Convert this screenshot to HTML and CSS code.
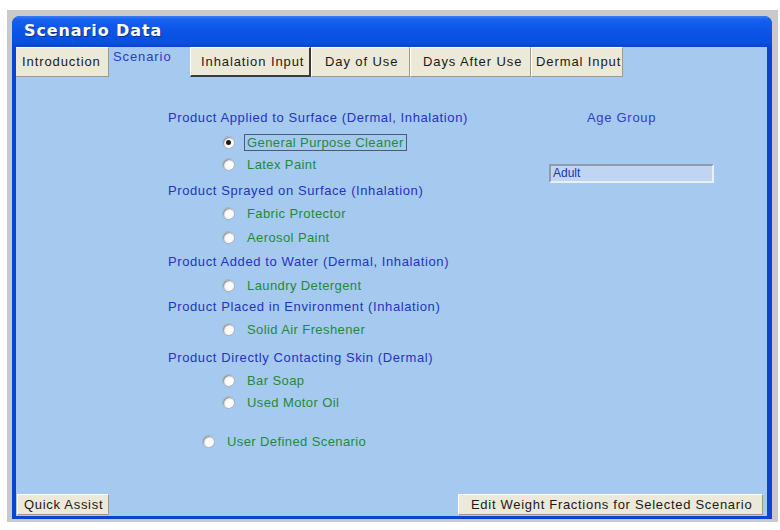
FILE: index.html
```html
<!DOCTYPE html>
<html>
<head>
<meta charset="utf-8">
<link rel="stylesheet" href="styles.css">
</head>
<body>
<div class="frame">
  <div class="window">
    <div class="titlebar">Scenario Data</div>
    <div class="content">
      <div class="tabs">
        <div class="tab t-intro">Introduction</div>
        <div class="tab t-scen active">Scenario</div>
        <div class="tab t-inh raised">Inhalation Input</div>
        <div class="tab t-day">Day of Use</div>
        <div class="tab t-after">Days After Use</div>
        <div class="tab t-derm">Dermal Input</div>
      </div>
      <div class="main">
        <div class="list">
          <div class="row head h1">Product Applied to Surface (Dermal, Inhalation)</div>
          <div class="row opt o1"><span class="radio checked"></span><span class="label focus">General Purpose Cleaner</span></div>
          <div class="row opt"><span class="radio"></span><span class="label">Latex Paint</span></div>
          <div class="row head h2">Product Sprayed on Surface (Inhalation)</div>
          <div class="row opt"><span class="radio"></span><span class="label">Fabric Protector</span></div>
          <div class="row opt o2"><span class="radio"></span><span class="label">Aerosol Paint</span></div>
          <div class="row head h3">Product Added to Water (Dermal, Inhalation)</div>
          <div class="row opt o3"><span class="radio"></span><span class="label">Laundry Detergent</span></div>
          <div class="row head">Product Placed in Environment (Inhalation)</div>
          <div class="row opt"><span class="radio"></span><span class="label">Solid Air Freshener</span></div>
          <div class="row head h5">Product Directly Contacting Skin (Dermal)</div>
          <div class="row opt"><span class="radio"></span><span class="label">Bar Soap</span></div>
          <div class="row opt"><span class="radio"></span><span class="label">Used Motor Oil</span></div>
          <div class="row opt user"><span class="radio"></span><span class="label">User Defined Scenario</span></div>
        </div>
        <div class="age">
          <div class="age-title">Age Group</div>
          <div class="age-box">Adult</div>
        </div>
      </div>
      <div class="buttons">
        <div class="btn quick">Quick Assist</div>
        <div class="btn edit">Edit Weight Fractions for Selected Scenario</div>
      </div>
    </div>
  </div>
</div>
</body>
</html>
```
FILE: styles.css
```css
html, body {
  margin: 0;
  padding: 0;
  background: #ffffff;
}
body {
  width: 780px;
  height: 530px;
  overflow: hidden;
  font-family: "Liberation Sans", Arial, sans-serif;
  font-size: 13px;
}
.frame {
  margin: 10px 0 0 7px;
  width: 771px;
  height: 512px;
  box-sizing: border-box;
  background: #c9c9cb;
  padding: 6px 6px 3px 5px;
}
.window {
  height: 100%;
  box-sizing: border-box;
  background: #0a44d0;
  border-radius: 8px 8px 0 0;
  padding: 0 5px 3px 4px;
  display: flex;
  flex-direction: column;
}
.titlebar {
  height: 31px;
  flex: none;
  margin: 0 -5px 0 -4px;
  padding-left: 12px;
  border-radius: 8px 8px 0 0;
  background: linear-gradient(#3a7ff5 0%, #1560ee 12%, #0b54e6 50%, #0a50e2 85%, #0846cc 100%);
  color: #ffffff;
  font-family: "DejaVu Sans", Verdana, sans-serif;
  font-weight: bold;
  font-size: 16px;
  line-height: 30px;
  letter-spacing: 0.9px;
  text-shadow: 1px 1px 0 #0a2f90;
}
.content {
  flex: 1;
  background: #a6c9ef;
  display: flex;
  flex-direction: column;
}
.tabs {
  display: flex;
  height: 30px;
  flex: none;
}
.tab {
  box-sizing: border-box;
  height: 30px;
  background: #ece9d8;
  color: #1a1a1a;
  letter-spacing: 0.9px;
  line-height: 27px;
  padding-left: 6px;
  border-left: 1px solid #ffffff;
  border-top: 1px solid #ffffff;
  border-right: 1px solid #9d9a8c;
  border-bottom: 1px solid #9d9a8c;
}
.t-intro { width: 93px; border-left: none; }
.t-scen { width: 81px; }
.t-inh { width: 121px; padding-left: 10px; }
.t-day { width: 99px; padding-left: 13px; }
.t-after { width: 121px; padding-left: 12px; }
.t-derm { width: 92px; padding-left: 4px; }
.tab.active {
  background: transparent;
  border: none;
  color: #2a3cc8;
  line-height: 20px;
  padding-left: 4px;
}
.tab.raised {
  border-right: 2px solid #3a3a3a;
  border-bottom: 2px solid #3a3a3a;
}
.main {
  flex: 1;
  display: flex;
}
.list {
  width: 381px;
  margin-left: 152px;
  padding-top: 30px;
  display: flex;
  flex-direction: column;
}
.row {
  height: 22px;
  line-height: 22px;
  white-space: nowrap;
  display: flex;
  align-items: center;
}
.head {
  color: #2433c0;
  letter-spacing: 0.6px;
}
.opt {
  color: #1f8a3c;
  padding-left: 54px;
}
.o1 { margin-top: 2px; }
.h2 { margin-top: 5px; }
.o2 { margin-top: 2px; }
.h3 { margin-top: 3px; }
.o3 { margin-top: 1px; }
.h5 { margin-top: 7px; }
.user { margin-top: 17px; padding-left: 34px; }
.radio {
  width: 13px;
  height: 13px;
  box-sizing: border-box;
  border-radius: 50%;
  border: 1px solid #aab4c2;
  background: radial-gradient(circle at 62% 62%, #ffffff 0%, #fbfbf9 40%, #e4e4de 75%, #c9c9c2 100%);
  box-shadow: inset 1px 1px 1px #8a93a0;
  flex: none;
  margin-right: 9px;
  position: relative;
}
.radio.checked::after {
  content: "";
  position: absolute;
  left: 3px;
  top: 3px;
  width: 5px;
  height: 5px;
  border-radius: 50%;
  background: #1a1a1a;
}
.label {
  letter-spacing: 0.4px;
  padding: 0 2px;
  line-height: 15px;
  border: 1px solid transparent;
}
.label.focus {
  border: 1px solid #4a5a7a;
}
.age {
  width: 165px;
  padding-top: 30px;
}
.age-title {
  height: 22px;
  line-height: 22px;
  color: #2f3fc4;
  padding-left: 38px;
  letter-spacing: 0.7px;
}
.age-box {
  margin-top: 35px;
  box-sizing: border-box;
  height: 19px;
  width: 165px;
  background: #bfd5f2;
  border-top: 2px solid #8f9caf;
  border-left: 2px solid #8f9caf;
  border-right: 2px solid #e8f0fa;
  border-bottom: 2px solid #e8f0fa;
  color: #2433b0;
  padding-left: 2px;
  line-height: 15px;
  font-size: 12px;
}
.buttons {
  display: flex;
  justify-content: space-between;
  padding: 0 4px 1px 1px;
  height: 21px;
  flex: none;
}
.btn {
  box-sizing: border-box;
  height: 21px;
  background: #ece9d8;
  color: #1a1a1a;
  line-height: 19px;
  letter-spacing: 0.7px;
  border-top: 1px solid #ffffff;
  border-left: 1px solid #ffffff;
  border-right: 1px solid #9d9a8c;
  border-bottom: 1px solid #9d9a8c;
}
.quick { width: 92px; padding-left: 6px; }
.edit { width: 305px; padding-left: 12px; }
```
